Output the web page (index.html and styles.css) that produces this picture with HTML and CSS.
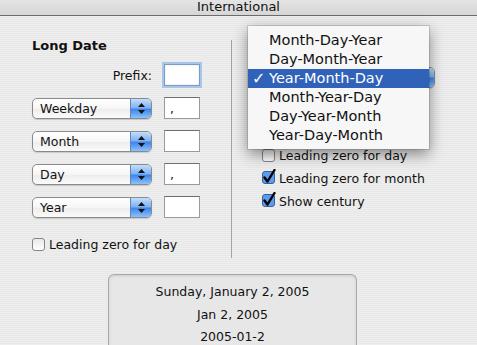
FILE: index.html
```html
<!DOCTYPE html>
<html lang="en">

<head>
    <meta charset="UTF-8">
    <meta name="viewport" content="width=device-width, initial-scale=1.0">
    <title>International</title>
    <link rel="stylesheet" href="styles.css">
</head>

<body>
    <div class="window">
        <div class="titlebar">International</div>

        <div class="columns">
            <div class="long-date">
                <div class="heading">Long Date</div>

                <div class="row prefix-row">
                    <span class="label">Prefix:</span>
                    <span class="field focused"></span>
                </div>
                <div class="row">
                    <div class="popup"><span class="popup-text">Weekday</span><span class="popup-arrows"><svg width="7" height="11" viewBox="0 0 7 11"><polygon points="3.5,0 7,4 0,4" /><polygon points="0,7 7,7 3.5,11" /></svg></span></div>
                    <span class="field">,</span>
                </div>
                <div class="row">
                    <div class="popup"><span class="popup-text">Month</span><span class="popup-arrows"><svg width="7" height="11" viewBox="0 0 7 11"><polygon points="3.5,0 7,4 0,4" /><polygon points="0,7 7,7 3.5,11" /></svg></span></div>
                    <span class="field"></span>
                </div>
                <div class="row">
                    <div class="popup"><span class="popup-text">Day</span><span class="popup-arrows"><svg width="7" height="11" viewBox="0 0 7 11"><polygon points="3.5,0 7,4 0,4" /><polygon points="0,7 7,7 3.5,11" /></svg></span></div>
                    <span class="field">,</span>
                </div>
                <div class="row">
                    <div class="popup"><span class="popup-text">Year</span><span class="popup-arrows"><svg width="7" height="11" viewBox="0 0 7 11"><polygon points="3.5,0 7,4 0,4" /><polygon points="0,7 7,7 3.5,11" /></svg></span></div>
                    <span class="field"></span>
                </div>

                <div class="check left-check">
                    <span class="box"></span>
                    <span>Leading zero for day</span>
                </div>
            </div>

            <div class="divider"></div>

            <div class="date-order">
                <!-- the popup whose menu is open; its label is hidden under the menu -->
                <div class="popup wide"><span class="popup-text"></span><span class="popup-arrows"><svg width="7" height="11" viewBox="0 0 7 11"><polygon points="3.5,0 7,4 0,4" /><polygon points="0,7 7,7 3.5,11" /></svg></span></div>

                <div class="checks">
                    <div class="check">
                        <span class="box"></span>
                        <span>Leading zero for day</span>
                    </div>
                    <div class="check">
                        <svg class="tick" width="16" height="16" viewBox="0 0 16 16">
                            <rect x="0.5" y="2.5" width="12" height="12" rx="2.5" class="tick-box" />
                            <path d="M2.5 8.5 L5.5 12.5 L12.5 1" class="tick-mark" />
                        </svg>
                        <span>Leading zero for month</span>
                    </div>
                    <div class="check">
                        <svg class="tick" width="16" height="16" viewBox="0 0 16 16">
                            <rect x="0.5" y="2.5" width="12" height="12" rx="2.5" class="tick-box" />
                            <path d="M2.5 8.5 L5.5 12.5 L12.5 1" class="tick-mark" />
                        </svg>
                        <span>Show century</span>
                    </div>
                </div>
            </div>
        </div>

        <div class="preview">
            <div>Sunday, January 2, 2005</div>
            <div>Jan 2, 2005</div>
            <div>2005-01-2</div>
        </div>

        <!-- open popup menu for the date order -->
        <ul class="menu">
            <li>Month-Day-Year</li>
            <li>Day-Month-Year</li>
            <li class="selected"><span class="checkmark">✓</span>Year-Month-Day</li>
            <li>Month-Year-Day</li>
            <li>Day-Year-Month</li>
            <li>Year-Day-Month</li>
        </ul>
    </div>
</body>

</html>
```

FILE: styles.css
```css
body {
    margin: 0;
    overflow: hidden;
    font-family: "DejaVu Sans", sans-serif;
    font-size: 12.5px;
    color: #111;
}

.window {
    position: relative;
    width: 477px;
    height: 345px;
    overflow: hidden;
    background: repeating-linear-gradient(#eeeeee 0 1px, #e8e8e8 1px 2px);
}

.titlebar {
    height: 15px;
    line-height: 14px;
    font-size: 13px;
    text-align: center;
    border-bottom: 1px solid #6c6c6c;
    background: linear-gradient(#e4e4e4, #d6d6d6);
}

.columns {
    display: flex;
    height: 242px;
}

.long-date {
    width: 199px;
    padding-left: 32px;
    display: flex;
    flex-direction: column;
    gap: 11px;
}

.heading {
    margin-top: 22px;
    font-weight: bold;
    font-size: 13px;
    line-height: 15px;
}

.row {
    display: flex;
    align-items: center;
    gap: 12px;
    width: 168px;
    height: 22px;
}

.prefix-row {
    justify-content: flex-end;
}

.field {
    box-sizing: border-box;
    width: 36px;
    height: 22px;
    padding: 4px 0 0 5px;
    background: #fff;
    border: 1px solid #9a9a9a;
    border-top-color: #6e6e6e;
    line-height: 14px;
}

.field.focused {
    border-color: #7d9cc4;
    box-shadow: 0 0 0 2px #a9c6ea, inset 0 0 1px #7d9cc4;
}

.popup {
    box-sizing: border-box;
    display: flex;
    width: 120px;
    height: 21px;
    border: 1px solid #8a8a8a;
    border-radius: 5px;
    background: linear-gradient(#ffffff, #f6f6f6 50%, #ececec 51%, #fbfbfb);
    overflow: hidden;
    box-shadow: 0 1px 1px rgba(0, 0, 0, 0.15);
}

.popup-text {
    flex: 1;
    padding-left: 7px;
    line-height: 19px;
    font-size: 12.5px;
}

.popup-arrows {
    width: 20px;
    display: flex;
    align-items: center;
    justify-content: center;
    border-left: 1px solid #5e86c0;
    background: linear-gradient(#c4defb, #7fb3f3 45%, #3f86ec 55%, #8cc2fb);
}

.popup-arrows polygon {
    fill: #111;
}

.check {
    display: flex;
    align-items: center;
    gap: 4px;
    height: 23px;
}

.left-check {
    margin-top: 7px;
    height: 16px;
}

.box {
    box-sizing: border-box;
    width: 13px;
    height: 13px;
    border: 1px solid #858585;
    border-radius: 3px;
    background: linear-gradient(#e9e9e9, #ffffff);
}

.tick {
    margin-top: -3px;
    margin-right: -3px;
}

.tick-box {
    fill: #5c9cf0;
    stroke: #3d5f96;
}

.tick-mark {
    fill: none;
    stroke: #000;
    stroke-width: 2.4;
    stroke-linecap: round;
    stroke-linejoin: round;
}

.divider {
    width: 1px;
    height: 218px;
    margin-top: 24px;
    background: #a4a4a4;
}

.date-order {
    display: flex;
    flex-direction: column;
    padding-left: 18px;
}

.popup.wide {
    width: 185px;
    margin-top: 51px;
}

.checks {
    margin-top: 56px;
    margin-left: 12px;
}

.preview {
    box-sizing: border-box;
    width: 249px;
    height: 90px;
    margin: 16px 0 0 108px;
    padding-top: 6px;
    border: 1px solid #a9a9a9;
    border-bottom: 0;
    border-radius: 6px 6px 0 0;
    background: #e7e7e7;
    box-shadow: inset 0 1px 3px rgba(0, 0, 0, 0.12);
    text-align: center;
    line-height: 22.5px;
}

.menu {
    position: absolute;
    top: 26px;
    left: 248px;
    width: 181px;
    margin: 0;
    padding: 5px 0 4px;
    list-style: none;
    background: rgba(247, 247, 247, 0.98);
    box-shadow: 0 5px 14px rgba(0, 0, 0, 0.45), 0 0 0 1px rgba(0, 0, 0, 0.12);
    font-size: 14.5px;
}

.menu li {
    position: relative;
    height: 19px;
    line-height: 19px;
    padding-left: 21px;
}

.menu li.selected {
    background: #3162b9;
    color: #fff;
}

.checkmark {
    position: absolute;
    left: 4px;
    top: 0;
    font-size: 16px;
    font-weight: bold;
}
```
